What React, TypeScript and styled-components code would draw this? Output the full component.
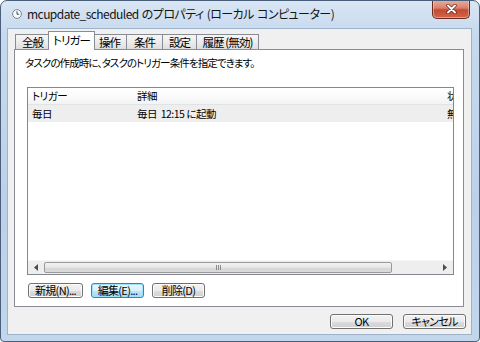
import React from "react";
import styled, { createGlobalStyle } from "styled-components";

const Global = createGlobalStyle`
  html, body { margin: 0; padding: 0; background: #ffffff; }
  body { width: 480px; height: 342px; overflow: hidden; }
  * { box-sizing: border-box; }
`;

const UI_FONT = `"Noto Sans CJK JP", "Noto Sans", sans-serif`;

const Window = styled.div`
  width: 480px;
  height: 342px;
  display: flex;
  flex-direction: column;
  border: 1px solid #4a5f7c;
  border-radius: 7px 7px 4px 4px;
  background: linear-gradient(180deg, #d9e6f4 0%, #c6d9ee 10%, #bcd1e9 60%, #c2d6ec 100%);
  font-family: ${UI_FONT};
  font-feature-settings: "palt";
  color: #000;
  overflow: hidden;
`;

const TitleBar = styled.div`
  height: 27px;
  display: flex;
  align-items: flex-start;
  padding-left: 11px;
  flex-shrink: 0;
`;

const TitleIcon = styled.svg`
  width: 10px;
  height: 10px;
  margin-top: 8px;
  flex-shrink: 0;
`;

const TitleText = styled.div`
  margin-left: 5px;
  margin-top: 4px;
  font-size: 12px;
  line-height: 18px;
  color: #151515;
  letter-spacing: -0.55px;
  word-spacing: 1px;
  white-space: nowrap;
`;

const CloseButton = styled.div`
  margin-left: auto;
  margin-right: 9px;
  margin-top: -1px;
  width: 38px;
  height: 19px;
  border: 1px solid #6a2c20;
  border-top: none;
  border-radius: 0 0 5px 5px;
  background: linear-gradient(180deg, #e7b1a2 0%, #d98068 45%, #c54a33 55%, #d0664a 100%);
  box-shadow: inset 0 0 0 1px rgba(255, 225, 215, 0.45);
  display: flex;
  align-items: center;
  justify-content: center;
`;

const Client = styled.div`
  flex: 1;
  margin: 0 7px 6px 6px;
  background: #f0f0f0;
  border: 1px solid #9eb2c9;
  display: flex;
  flex-direction: column;
  padding: 1px 7px 5px 6px;
`;

const TabStrip = styled.div`
  display: flex;
  align-items: flex-end;
  height: 20px;
  padding-left: 1px;
  position: relative;
  z-index: 1;
  margin-bottom: -1px;
`;

const Tab = styled.div<{ $active?: boolean; $w: number }>`
  width: ${(p) => p.$w}px;
  height: ${(p) => (p.$active ? "19px" : "16px")};
  margin: 0 ${(p) => (p.$active ? "-2px" : "0")};
  border: 1px solid #898c95;
  border-bottom: ${(p) => (p.$active ? "none" : "1px solid #898c95")};
  border-left: ${(p) => (p.$active ? "1px solid #898c95" : "none")};
  background: ${(p) =>
    p.$active ? "#ffffff" : "linear-gradient(180deg, #f6f6f6 0%, #ececec 50%, #dedede 100%)"};
  font-size: 11.5px;
  letter-spacing: -0.9px;
  line-height: ${(p) => (p.$active ? "16px" : "14px")};
  text-align: center;
  position: relative;
  z-index: ${(p) => (p.$active ? 2 : 1)};
  white-space: nowrap;
  &:first-child {
    border-left: 1px solid #898c95;
  }
`;

const Panel = styled.div`
  flex: 1;
  background: #ffffff;
  border: 1px solid #898c95;
  display: flex;
  flex-direction: column;
  padding: 6px 9px 8px 12px;
`;

const Description = styled.div`
  font-size: 10.5px;
  letter-spacing: -0.9px;
  line-height: 14px;
  margin-left: -2px;
  white-space: nowrap;
`;

const ListBox = styled.div`
  margin-top: 17px;
  height: 188px;
  border: 1px solid #828790;
  display: flex;
  flex-direction: column;
  overflow: hidden;
`;

const Row = styled.div<{ $header?: boolean }>`
  display: grid;
  grid-template-columns: 105px 310px 30px;
  height: 17px;
  flex-shrink: 0;
  align-items: center;
  font-size: 10.5px;
  letter-spacing: -0.5px;
  line-height: 16px;
  background: ${(p) =>
    p.$header ? "linear-gradient(180deg, #ffffff 0%, #fbfbfb 50%, #f2f3f5 100%)" : "#eeeeee"};
  border-bottom: ${(p) => (p.$header ? "1px solid #e2e3e5" : "none")};
  white-space: nowrap;
  overflow: hidden;
`;

const Cell = styled.div`
  padding-left: 4px;
  overflow: hidden;
  white-space: pre;
`;

const ListBody = styled.div`
  flex: 1;
  background: #fff;
`;

const HScroll = styled.div`
  height: 14px;
  flex-shrink: 0;
  display: flex;
  align-items: stretch;
  background: #eeeeef;
  border-top: 1px solid #f6f6f6;
`;

const ScrollArrow = styled.div`
  width: 16px;
  display: flex;
  align-items: center;
  justify-content: center;
`;

const ScrollTrack = styled.div`
  flex: 1;
  display: flex;
  padding: 1px 0;
`;

const Thumb = styled.div`
  width: 348px;
  border: 1px solid #9a9a9a;
  border-radius: 2px;
  background: linear-gradient(180deg, #f3f3f3 0%, #e6e6e6 50%, #d6d6d6 51%, #dadada 100%);
  display: flex;
  align-items: center;
  justify-content: center;
  gap: 1px;
`;

const Grip = styled.span`
  width: 1px;
  height: 5px;
  background: #8a8a8a;
`;

const ButtonRow = styled.div`
  display: flex;
  gap: 8px;
  margin-top: 8px;
  margin-left: 1px;
`;

const Button = styled.div<{ $focused?: boolean; $w: number }>`
  width: ${(p) => p.$w}px;
  height: 15px;
  border: 1px solid ${(p) => (p.$focused ? "#3c7fb1" : "#707070")};
  border-radius: 3px;
  background: ${(p) =>
    p.$focused
      ? "linear-gradient(180deg, #eaf6fd 0%, #d9f0fc 50%, #bee6fd 51%, #a7d9f5 100%)"
      : "linear-gradient(180deg, #f2f2f2 0%, #ebebeb 50%, #dddddd 51%, #cfcfcf 100%)"};
  box-shadow: inset 0 0 0 1px ${(p) => (p.$focused ? "#9fe4fb" : "#fcfcfc")};
  font-size: 11px;
  letter-spacing: -0.7px;
  line-height: 13px;
  display: flex;
  align-items: center;
  justify-content: center;
  white-space: nowrap;
`;

const Footer = styled.div`
  display: flex;
  justify-content: flex-end;
  gap: 10px;
  margin-top: 7px;
  margin-right: -2px;
`;

const ClockIcon = () => (
  <TitleIcon viewBox="0 0 10 10">
    <circle cx="5" cy="5" r="4.4" fill="#fafafa" stroke="#7a8594" strokeWidth="1" />
    <path d="M5 2.3 V5.2 H7.2" stroke="#3d4b5e" strokeWidth="1" fill="none" />
  </TitleIcon>
);

export default function App() {
  return (
    <>
      <Global />
      <Window>
        <TitleBar>
          <ClockIcon />
          <TitleText>mcupdate_scheduled のプロパティ (ローカル コンピューター)</TitleText>
          <CloseButton>
            <svg width="11" height="10" viewBox="0 0 11 10">
              <path d="M2 1.5 L9 8.5 M9 1.5 L2 8.5" stroke="#5a1a10" strokeWidth="3.2" strokeLinecap="round" />
              <path d="M2 1.5 L9 8.5 M9 1.5 L2 8.5" stroke="#ffffff" strokeWidth="2" strokeLinecap="round" />
            </svg>
          </CloseButton>
        </TitleBar>
        <Client>
          <TabStrip>
            <Tab $w={35}>全般</Tab>
            <Tab $w={47} $active>トリガー</Tab>
            <Tab $w={34}>操作</Tab>
            <Tab $w={36}>条件</Tab>
            <Tab $w={34}>設定</Tab>
            <Tab $w={62}>履歴 (無効)</Tab>
          </TabStrip>
          <Panel>
            <Description>タスクの作成時に、タスクのトリガー条件を指定できます。</Description>
            <ListBox>
              <Row $header>
                <Cell>トリガー</Cell>
                <Cell>詳細</Cell>
                <Cell>状態</Cell>
              </Row>
              <Row>
                <Cell>毎日</Cell>
                <Cell>{"毎日  12:15 に起動"}</Cell>
                <Cell>無効</Cell>
              </Row>
              <ListBody />
              <HScroll>
                <ScrollArrow>
                  <svg width="4" height="7" viewBox="0 0 4 7">
                    <path d="M4 0 L0 3.5 L4 7 Z" fill="#4d4d4d" />
                  </svg>
                </ScrollArrow>
                <ScrollTrack>
                  <Thumb>
                    <Grip />
                    <Grip />
                    <Grip />
                  </Thumb>
                </ScrollTrack>
                <ScrollArrow>
                  <svg width="4" height="7" viewBox="0 0 4 7">
                    <path d="M0 0 L4 3.5 L0 7 Z" fill="#4d4d4d" />
                  </svg>
                </ScrollArrow>
              </HScroll>
            </ListBox>
            <ButtonRow>
              <Button $w={55}>新規(N)...</Button>
              <Button $w={53} $focused>編集(E)...</Button>
              <Button $w={53}>削除(D)</Button>
            </ButtonRow>
          </Panel>
          <Footer>
            <Button $w={63}>OK</Button>
            <Button $w={63}>キャンセル</Button>
          </Footer>
        </Client>
      </Window>
    </>
  );
}
